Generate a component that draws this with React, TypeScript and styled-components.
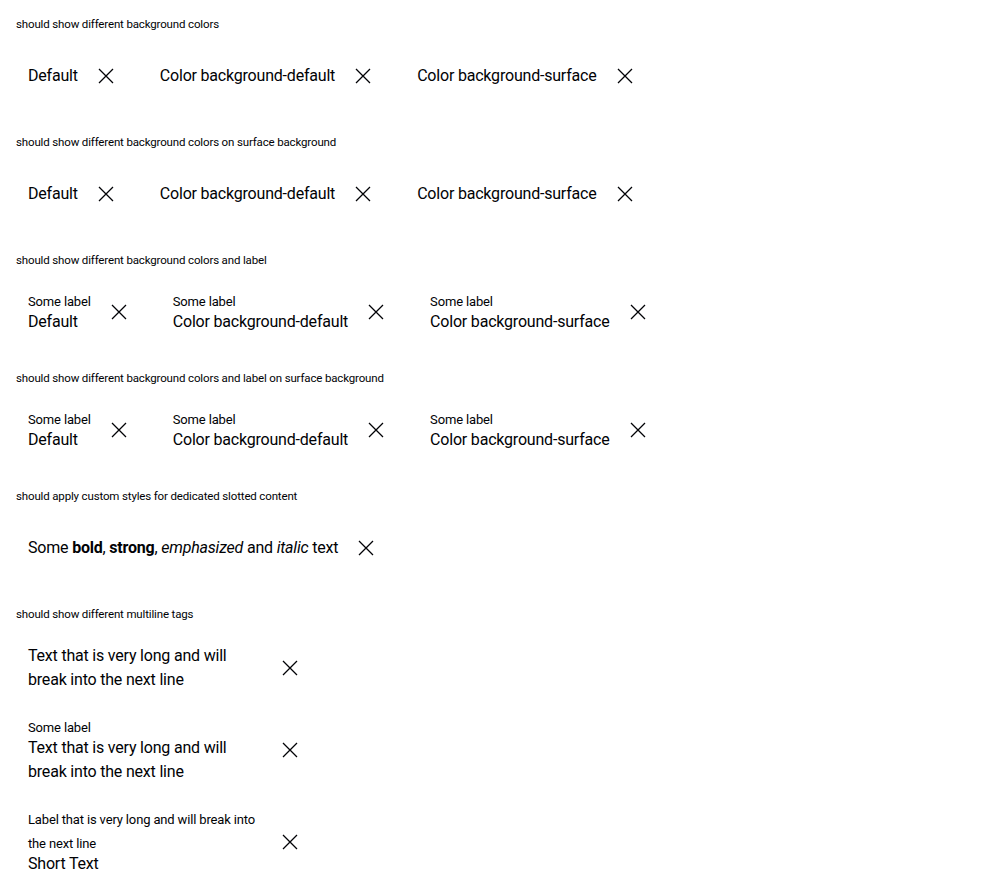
import React from "react";
import styled, { createGlobalStyle } from "styled-components";

const GlobalStyle = createGlobalStyle`
  html, body { margin: 0; padding: 0; background: #ffffff; }
  body { font-family: Roboto, "Liberation Sans", sans-serif; color: #010205; }
`;

const Page = styled.div`
  padding: 17px 16px 0 16px;
  display: flex;
  flex-direction: column;
`;

const Section = styled.section`
  display: flex;
  flex-direction: column;
  padding-bottom: 33px;
`;

const Heading = styled.h2`
  margin: -1px 0 18px 0;
  font-size: 11.5px;
  line-height: 16px;
  font-weight: 400;
  letter-spacing: -0.15px;
`;

const Row = styled.div<{ $column?: boolean }>`
  display: flex;
  flex-direction: ${(p) => (p.$column ? "column" : "row")};
  align-items: flex-start;
  gap: ${(p) => (p.$column ? "16px" : "18px")};
`;

const Tag = styled.div<{ $surface?: boolean }>`
  display: inline-flex;
  align-items: center;
  gap: 16px;
  box-sizing: border-box;
  min-height: 52px;
  padding: 4px 12px;
  border-radius: 4px;
  background: ${(p) => (p.$surface ? "#ffffff" : "#ffffff")};
`;

const Content = styled.div<{ $width?: number }>`
  display: flex;
  flex-direction: column;
  width: ${(p) => (p.$width ? `${p.$width}px` : "auto")};
`;

const Label = styled.span`
  display: block;
  font-size: 13px;
  line-height: 24px;
  margin-bottom: -4px;
  letter-spacing: -0.15px;
`;

const Value = styled.span`
  display: block;
  font-size: 16px;
  line-height: 24px;
  letter-spacing: -0.2px;
  white-space: normal;

  b, strong { font-weight: 700; }
  em, i { font-style: italic; }
`;

const CloseButton = styled.button`
  flex: none;
  width: 24px;
  height: 24px;
  padding: 0;
  margin: 0;
  border: 0;
  background: transparent;
  color: #010205;
  display: flex;
  align-items: center;
  justify-content: center;
  cursor: pointer;
`;

const CloseIcon = () => (
  <svg width="24" height="24" viewBox="0 0 24 24" aria-hidden="true">
    <path d="M5 5 L19 19 M19 5 L5 19" stroke="currentColor" strokeWidth="1.3" fill="none" />
  </svg>
);

type TagProps = {
  label?: string;
  children: React.ReactNode;
  width?: number;
  surface?: boolean;
};

const DismissibleTag = ({ label, children, width, surface }: TagProps) => (
  <Tag $surface={surface}>
    <Content $width={width}>
      {label && <Label>{label}</Label>}
      <Value>{children}</Value>
    </Content>
    <CloseButton aria-label="Remove">
      <CloseIcon />
    </CloseButton>
  </Tag>
);

const colorTags = (label?: string) => (
  <Row>
    <DismissibleTag label={label}>Default</DismissibleTag>
    <DismissibleTag label={label}>Color background-default</DismissibleTag>
    <DismissibleTag label={label} surface>
      Color background-surface
    </DismissibleTag>
  </Row>
);

export default function App() {
  return (
    <>
      <GlobalStyle />
      <Page>
        <Section>
          <Heading>should show different background colors</Heading>
          {colorTags()}
        </Section>
        <Section>
          <Heading>should show different background colors on surface background</Heading>
          {colorTags()}
        </Section>
        <Section>
          <Heading>should show different background colors and label</Heading>
          {colorTags("Some label")}
        </Section>
        <Section>
          <Heading>should show different background colors and label on surface background</Heading>
          {colorTags("Some label")}
        </Section>
        <Section>
          <Heading>should apply custom styles for dedicated slotted content</Heading>
          <Row>
            <DismissibleTag>
              Some <b>bold</b>, <strong>strong</strong>, <em>emphasized</em> and <i>italic</i> text
            </DismissibleTag>
          </Row>
        </Section>
        <Section>
          <Heading>should show different multiline tags</Heading>
          <Row $column>
            <DismissibleTag width={234}>Text that is very long and will break into the next line</DismissibleTag>
            <DismissibleTag width={234} label="Some label">
              Text that is very long and will break into the next line
            </DismissibleTag>
            <DismissibleTag width={234} label="Label that is very long and will break into the next line">
              Short Text
            </DismissibleTag>
          </Row>
        </Section>
      </Page>
    </>
  );
}
